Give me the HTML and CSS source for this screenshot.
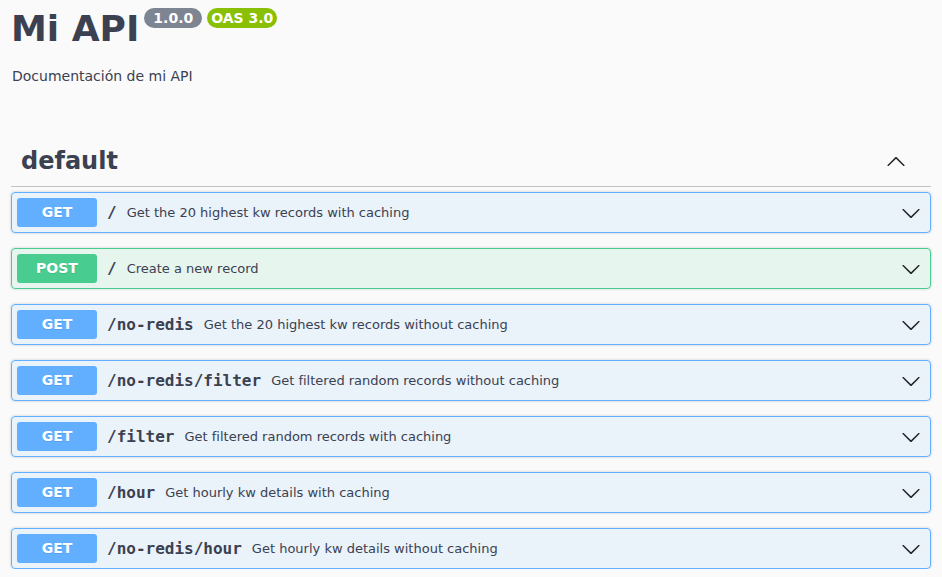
FILE: index.html
```html
<!DOCTYPE html>
<html lang="es">
<head>
<meta charset="utf-8">
<title>Mi API</title>
<link rel="stylesheet" href="styles.css">
</head>
<body>
<div class="wrapper">
  <div class="info">
    <h2 class="title">Mi API <span class="badge version">1.0.0</span><span class="badge oas">OAS 3.0</span></h2>
    <p class="description">Documentación de mi API</p>
  </div>

  <section class="tag-section">
    <h3 class="tag">
      <span class="tag-name">default</span>
      <svg class="tag-arrow" width="20" height="20" viewBox="0 0 20 20"><path d="M17.418 14.908c.272.268.709.268.979 0s.271-.701 0-.969l-7.908-7.83c-.27-.268-.707-.268-.979 0l-7.908 7.83c-.27.268-.27.701 0 .969.271.268.709.268.979 0L10 7.767l7.418 7.141z"/></svg>
    </h3>

    <div class="ops">
      <div class="op get">
        <span class="method">GET</span><span class="path">/</span><span class="desc">Get the 20 highest kw records with caching</span>
        <svg class="arrow" width="20" height="20" viewBox="0 0 20 20"><path d="M17.418 6.109c.272-.268.709-.268.979 0s.271.701 0 .969l-7.908 7.83c-.27.268-.707.268-.979 0l-7.908-7.83c-.27-.268-.27-.701 0-.969.271-.268.709-.268.979 0L10 13.25l7.418-7.141z"/></svg>
      </div>
      <div class="op post">
        <span class="method">POST</span><span class="path">/</span><span class="desc">Create a new record</span>
        <svg class="arrow" width="20" height="20" viewBox="0 0 20 20"><path d="M17.418 6.109c.272-.268.709-.268.979 0s.271.701 0 .969l-7.908 7.83c-.27.268-.707.268-.979 0l-7.908-7.83c-.27-.268-.27-.701 0-.969.271-.268.709-.268.979 0L10 13.25l7.418-7.141z"/></svg>
      </div>
      <div class="op get">
        <span class="method">GET</span><span class="path">/no-redis</span><span class="desc">Get the 20 highest kw records without caching</span>
        <svg class="arrow" width="20" height="20" viewBox="0 0 20 20"><path d="M17.418 6.109c.272-.268.709-.268.979 0s.271.701 0 .969l-7.908 7.83c-.27.268-.707.268-.979 0l-7.908-7.83c-.27-.268-.27-.701 0-.969.271-.268.709-.268.979 0L10 13.25l7.418-7.141z"/></svg>
      </div>
      <div class="op get">
        <span class="method">GET</span><span class="path">/no-redis/filter</span><span class="desc">Get filtered random records without caching</span>
        <svg class="arrow" width="20" height="20" viewBox="0 0 20 20"><path d="M17.418 6.109c.272-.268.709-.268.979 0s.271.701 0 .969l-7.908 7.83c-.27.268-.707.268-.979 0l-7.908-7.83c-.27-.268-.27-.701 0-.969.271-.268.709-.268.979 0L10 13.25l7.418-7.141z"/></svg>
      </div>
      <div class="op get">
        <span class="method">GET</span><span class="path">/filter</span><span class="desc">Get filtered random records with caching</span>
        <svg class="arrow" width="20" height="20" viewBox="0 0 20 20"><path d="M17.418 6.109c.272-.268.709-.268.979 0s.271.701 0 .969l-7.908 7.83c-.27.268-.707.268-.979 0l-7.908-7.83c-.27-.268-.27-.701 0-.969.271-.268.709-.268.979 0L10 13.25l7.418-7.141z"/></svg>
      </div>
      <div class="op get">
        <span class="method">GET</span><span class="path">/hour</span><span class="desc">Get hourly kw details with caching</span>
        <svg class="arrow" width="20" height="20" viewBox="0 0 20 20"><path d="M17.418 6.109c.272-.268.709-.268.979 0s.271.701 0 .969l-7.908 7.83c-.27.268-.707.268-.979 0l-7.908-7.830c-.27-.268-.27-.701 0-.969.271-.268.709-.268.979 0L10 13.25l7.418-7.141z"/></svg>
      </div>
      <div class="op get">
        <span class="method">GET</span><span class="path">/no-redis/hour</span><span class="desc">Get hourly kw details without caching</span>
        <svg class="arrow" width="20" height="20" viewBox="0 0 20 20"><path d="M17.418 6.109c.272-.268.709-.268.979 0s.271.701 0 .969l-7.908 7.83c-.27.268-.707.268-.979 0l-7.908-7.83c-.27-.268-.27-.701 0-.969.271-.268.709-.268.979 0L10 13.25l7.418-7.141z"/></svg>
      </div>
    </div>
  </section>
</div>
</body>
</html>
```
FILE: styles.css
```css
html, body {
  margin: 0;
  padding: 0;
  background: #fafafa;
}
body {
  font-family: "DejaVu Sans", sans-serif;
  color: #3b4151;
}
.wrapper {
  padding: 0 11px;
}
.info {
  padding-top: 8px;
}
.title {
  margin: 0;
  font-size: 36px;
  font-weight: 700;
  line-height: 42px;
  color: #3b4151;
  display: flex;
  align-items: flex-start;
}
.badge {
  display: inline-block;
  color: #fff;
  font-size: 14px;
  font-weight: 700;
  line-height: 20px;
  height: 20px;
  padding: 0 9px;
  border-radius: 57px;
}
.version {
  background: #7d8492;
  margin-left: 5px;
}
.oas {
  background: #89bf04;
  margin-left: 5px;
  padding: 0 4px;
}
.description {
  margin: 18px 0 0;
  font-size: 14px;
  line-height: 16px;
  padding-left: 1px;
}
.tag-section {
  margin-top: 49px;
}
.tag {
  margin: 0 0 5px;
  display: flex;
  align-items: center;
  justify-content: space-between;
  padding: 10px 25px 7px 10px;
  height: 36px;
  border-bottom: 1px solid rgba(59, 65, 81, 0.3);
}
.tag-name {
  font-size: 24px;
  font-weight: 700;
  line-height: 28px;
}
.tag-arrow {
  fill: #222;
}
.ops {
  display: flex;
  flex-direction: column;
  gap: 15px;
}
.op {
  display: flex;
  align-items: center;
  padding: 5px;
  border: 1px solid #61affe;
  border-radius: 4px;
  background: rgba(97, 175, 254, 0.1);
  box-shadow: 0 0 3px rgba(0, 0, 0, 0.19);
}
.op.post {
  border-color: #49cc90;
  background: rgba(73, 204, 144, 0.1);
}
.method {
  flex: none;
  width: 80px;
  height: 29px;
  line-height: 29px;
  text-align: center;
  border-radius: 3px;
  background: #61affe;
  color: #fff;
  font-size: 14px;
  font-weight: 700;
  text-shadow: 0 1px 0 rgba(0, 0, 0, 0.1);
}
.post .method {
  background: #49cc90;
}
.path {
  padding: 0 10px;
  font-family: "DejaVu Sans Mono", monospace;
  font-size: 16px;
  font-weight: 700;
  color: #3b4151;
}
.desc {
  flex: 1;
  font-size: 13px;
  color: #3b4151;
}
.arrow {
  flex: none;
  fill: #222;
  margin-right: 4px;
}
```
